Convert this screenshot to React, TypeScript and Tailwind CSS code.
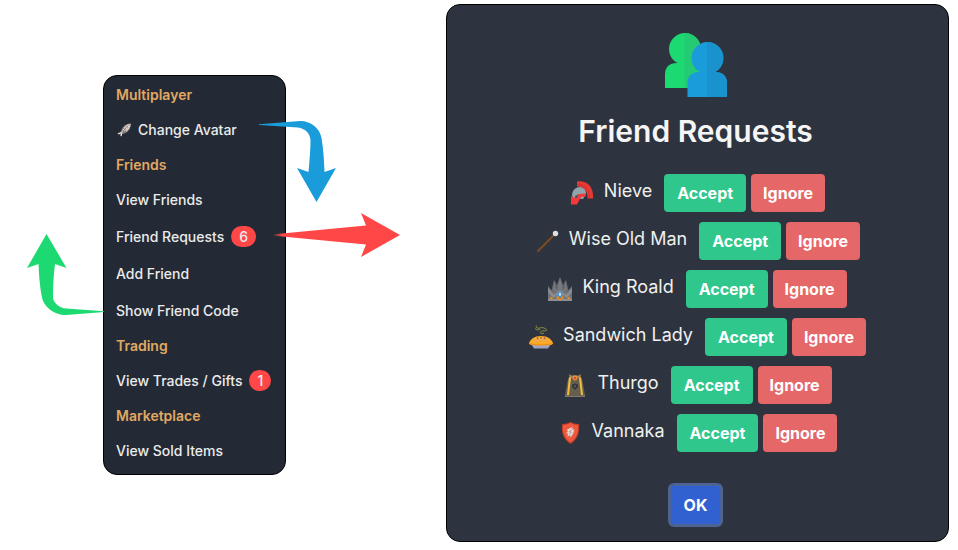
import type { ReactNode } from "react";

type MenuItem = { label: string; badge?: number; icon?: ReactNode };
type MenuGroup = { title: string; items: MenuItem[] };
type FriendRequest = { name: string; icon: ReactNode };

function FishIcon() {
  return (
    <svg viewBox="0 0 16 16" className="size-4 shrink-0" aria-hidden="true">
      <path d="M5.500 8C7 4 10 1.500 15 1.500C15 6 12 10.500 8 11.500L6 12L5 15L4 12.500L1 11.500L4.500 10Z" fill="#8f8583" />
      <path d="M8 5.500C10 3 12 2 14.500 2C14.500 5 13 8 10.500 10Z" fill="#c9bfbd" />
      <path d="M2 12L5.500 10.500L11 4.500M5 14L6 11M7 7L9 9.500M9 5L11 7.500M11.500 3.500L13 5" stroke="#eee6e4" strokeWidth="1" fill="none" />
      <path d="M6.500 9.500L12 3.800M8 10.500L10 8.500" stroke="#5d5452" strokeWidth="0.700" fill="none" />
    </svg>
  );
}

function HelmetIcon() {
  return (
    <svg viewBox="0 0 24 24" className="size-6" aria-hidden="true">
      <path d="M2 14C2 9 6 6 10 6C14 6 16 9 16 13L13 18L3 17Z" fill="#90a4ae" />
      <path d="M5 15L8 13.500L11 15L9 17L5 17Z" fill="#455a64" />
      <path d="M7 0.500C17 -1 24 6 23 17.500H17.500C18 10 14 5.500 7 5.500Z" fill="#e53935" />
      <path d="M7.500 3.500C14.500 3.500 20 9 19.500 17" stroke="#c62828" strokeWidth="0.700" fill="none" />
      <path d="M1 15L4 16.500L7 17L8.500 13L16 12.500L15.500 15.500L11 16L7 23.500H1Z" fill="#f5383a" />
    </svg>
  );
}

function StaffIcon() {
  return (
    <svg viewBox="0 0 24 24" className="size-6" aria-hidden="true">
      <path d="M3 22L19 6" stroke="#7b4a22" strokeWidth="2.200" strokeLinecap="round" />
      <circle cx="20.500" cy="4.500" r="2.700" fill="#dedede" />
    </svg>
  );
}

function CrownIcon() {
  return (
    <svg viewBox="0 0 24 24" className="size-6" aria-hidden="true">
      <path d="M3 15L6 3L9 8L12 0L15 8L18 3L21 15Z" fill="#63666b" />
      <path d="M12 0L14 8V14H10V8ZM6 3L8 14H5ZM18 3L19 14H16Z" fill="#77797d" />
      <path d="M0 9L5 15L8 11L12 14L16 11L19 15L24 9V24H0Z" fill="#707377" />
      <path d="M0 11L6 18L12 13L18 18L24 11V15L19 21L12 16L5 21L0 15Z" fill="#8b8d90" />
      <path d="M0 22H24V24H0Z" fill="#8f8f8f" />
      <path d="M1 22L3 19.500L5 22ZM19 22L21 19.500L23 22ZM8 21L9.500 18L12 22L14.500 18L16 21L12 23.500Z" fill="#e08a25" />
      <path d="M12 14L14.500 17.500L12 21L9.500 17.500Z" fill="#2196f3" />
      <path d="M12 15L13.300 17.500L12 19.500L10.700 17.500Z" fill="#c4e8ff" />
    </svg>
  );
}

function PieIcon() {
  return (
    <svg viewBox="0 0 24 24" className="size-6" aria-hidden="true">
      <path d="M8 0.500C5.500 1.500 8 4 11 3C13 2 16 3 17.500 4.500C18 7 14 5 12 6.500C10 8.500 13 9.500 15 8M6.500 3.500C6 5 9 5 11 4.500" stroke="#9b9640" strokeWidth="0.900" fill="none" />
      <path d="M2 19H22L19 23.500H5Z" fill="#9da3c4" />
      <path d="M0 18C2 14 5 11 12 11S22 14 24 18C24 20 21 20.500 12 20.500S0 20 0 18Z" fill="#fba927" />
      <path d="M4 15.500C7 11.500 17 11.500 20 15.500Q12 17.500 4 15.500Z" fill="#f0a850" />
      <path d="M8 12.500L9 14M12 12V13.500M16 12.500L15 14" stroke="#8c5134" strokeWidth="1.100" />
      <path d="M1 19Q12 21 23 19" stroke="#e88a1b" fill="none" />
    </svg>
  );
}

function CapeIcon() {
  return (
    <svg viewBox="0 0 24 24" className="size-6" aria-hidden="true">
      <path d="M7 2L17 2L19.500 8L22 22L18 24L12 23L6 24L2 22L4.500 8Z" fill="#665f4e" />
      <path d="M6 4L8 5L6 22L4 22ZM18 4L16 5L18 22L20 22Z" fill="#f0bd3e" />
      <path d="M6 1L9 3.500H15L18 1L17 5H7Z" fill="#a89158" />
      <path d="M2 22L6 23L18 23L22 22V24H2Z" fill="#817a66" />
      <circle cx="12" cy="5" r="2.400" fill="#f0a53a" />
      <circle cx="12" cy="5" r="1.600" fill="#ef4136" />
      <path d="M9 11.500L12 10.500L15 11.500V14L12 17L9 14Z" fill="#33373b" />
      <path d="M10.500 12.500H13.500L12 14.500Z" fill="#686d70" />
    </svg>
  );
}

function ShieldIcon() {
  return (
    <svg viewBox="0 0 24 24" className="size-6" aria-hidden="true">
      <path d="M4 3Q9 3 12.500 1Q16 3 21 3C22 13 19 19 12.500 23C6 19 3 13 4 3Z" fill="#b93c28" />
      <path d="M5 4Q9 4 12.500 2Q16 4 20 4C21 12 18 18 12.500 21.500C7 18 4 12 5 4Z" fill="#f1573e" />
      <path d="M15 5.500L12 7L8.500 9L10 10L8 12.500L10 12.500L9.500 16L12 14L12.500 16.500L15 13L16.500 8.500L14.500 9L15.500 7L13 8Z" fill="#ddd5cf" />
      <path d="M11 11L13.500 9.500M11.500 13L13.500 11" stroke="#d25b48" strokeWidth="0.700" />
    </svg>
  );
}

function FriendsIcon() {
  return (
    <svg viewBox="0 0 62 64" className="h-16 w-[62px]" aria-hidden="true">
      <path d="M12 30H28Q39 30 39 42V55H0V42Q0 30 12 30Z" fill="#1dd971" />
      <circle cx="20" cy="16" r="16" fill="#1dd971" />
      <path d="M19.500 0H20A16 16 0 0 1 27.500 30Q39 30 39 42V55H19.500Z" fill="#25cb72" />
      <path d="M34 39H50Q62 39 62 51V64H22.500V51Q22.500 39 34 39Z" fill="#1a9cdb" />
      <circle cx="42.500" cy="25" r="16" fill="#1a9cdb" />
      <path d="M42 9H42.500A16 16 0 0 1 50 39Q62 39 62 51V64H42Z" fill="#1a92cd" />
    </svg>
  );
}

function Arrows() {
  return (
    <div aria-hidden="true" className="pointer-events-none">
      <svg viewBox="26 233 78 84" className="absolute top-[158px] -left-[77px] h-[84px] w-[78px]">
        <path d="M46.500 234L66.500 268L55 264C53.500 276 53 286 53 298C54 304 60 308 66 308.500L104 311.200V312L66 315C54 315 43 307 41.500 295C39.500 283 39 275 38.500 264L27 268Z" fill="#1dd971" />
      </svg>
      <svg viewBox="258 120 79 83" className="absolute top-[45px] left-[155px] h-[83px] w-[79px]">
        <path d="M259 124.200L300 121C312 121 320 129 321.500 138C323.500 150 324 160 324.500 172L336 168L316.500 202L297 168L308.500 172C309.500 160 310.500 150 310.500 140C310 133 305 128.500 298 127.500L259 125Z" fill="#1a9cdb" />
      </svg>
      <svg viewBox="274 212 127 46" className="absolute top-[137px] left-[171px] h-[46px] w-[127px]">
        <defs>
          <linearGradient id="redTail" gradientUnits="userSpaceOnUse" x1="272" y1="0" x2="282" y2="0">
            <stop offset="0" stopColor="#ff4747" stopOpacity="0" />
            <stop offset="1" stopColor="#ff4747" />
          </linearGradient>
        </defs>
        <path d="M274 234.300L366 225.500L361 213L400 235L361 257L366 244.500L274 235.700Z" fill="url(#redTail)" />
      </svg>
    </div>
  );
}

const groups: MenuGroup[] = [
  { title: "Multiplayer", items: [{ label: "Change Avatar", icon: <FishIcon /> }] },
  {
    title: "Friends",
    items: [
      { label: "View Friends" },
      { label: "Friend Requests", badge: 6 },
      { label: "Add Friend" },
      { label: "Show Friend Code" },
    ],
  },
  { title: "Trading", items: [{ label: "View Trades / Gifts", badge: 1 }] },
  { title: "Marketplace", items: [{ label: "View Sold Items" }] },
];

const requests: FriendRequest[] = [
  { name: "Nieve", icon: <HelmetIcon /> },
  { name: "Wise Old Man", icon: <StaffIcon /> },
  { name: "King Roald", icon: <CrownIcon /> },
  { name: "Sandwich Lady", icon: <PieIcon /> },
  { name: "Thurgo", icon: <CapeIcon /> },
  { name: "Vannaka", icon: <ShieldIcon /> },
];

function MultiplayerMenu() {
  return (
    <div className="relative mt-1 ml-[103px] w-[183px] shrink-0">
      <nav className="rounded-[14px] border border-black bg-[#232a35] px-3 pt-0.5 pb-[5px] text-sm">
        {groups.map((group) => (
          <section key={group.title}>
            <h2 className="flex h-[33px] items-center font-semibold text-[#e0a862]">{group.title}</h2>
            <ul>
              {group.items.map((item) => (
                <li key={item.label}>
                  <button type="button" className="flex h-[37px] w-full items-center gap-[7px] font-medium whitespace-nowrap text-[#ebebeb]">
                    {item.icon ? (
                      <span className="flex items-center gap-1.5">
                        {item.icon}
                        {item.label}
                      </span>
                    ) : (
                      item.label
                    )}
                    {item.badge !== undefined && (
                      <span className="flex h-[21px] items-center rounded-full bg-[#ff4747] px-2">{item.badge}</span>
                    )}
                  </button>
                </li>
              ))}
            </ul>
          </section>
        ))}
      </nav>
      <Arrows />
    </div>
  );
}

function RequestsDialog() {
  return (
    <section
      role="dialog"
      aria-labelledby="dialog-title"
      className="flex min-w-0 flex-1 flex-col items-center rounded-[14px] border border-black bg-[#2d343f] pt-7 pr-1 pb-[14px]"
    >
      <FriendsIcon />
      <h1 id="dialog-title" className="mt-4 text-3xl leading-9 font-semibold text-[#f5f5f5]">
        Friend Requests
      </h1>
      <ul className="mt-[25px] flex flex-col items-center gap-2.5 pl-1">
        {requests.map((request) => (
          <li key={request.name} className="flex h-[38px] items-center">
            {request.icon}
            <span className="mr-3 ml-2.5 pb-1 text-lg leading-6 whitespace-nowrap text-[#f0f0f0]">{request.name}</span>
            <button type="button" className="mr-[5px] h-full rounded bg-[#30c78d] px-[13px] font-bold text-white">
              Accept
            </button>
            <button type="button" className="h-full rounded bg-[#e56767] px-3 font-bold text-white">
              Ignore
            </button>
          </li>
        ))}
      </ul>
      <button type="button" className="mt-[31px] h-11 rounded-md border-3 border-[#4c6394] bg-[#3160d1] px-[13px] font-bold text-white">
        OK
      </button>
    </section>
  );
}

export default function App() {
  return (
    <main className="flex min-h-screen items-center gap-40 bg-white pt-1 pr-[9px] pb-2 font-[Inter,'Liberation_Sans',sans-serif]">
      <MultiplayerMenu />
      <RequestsDialog />
    </main>
  );
}
